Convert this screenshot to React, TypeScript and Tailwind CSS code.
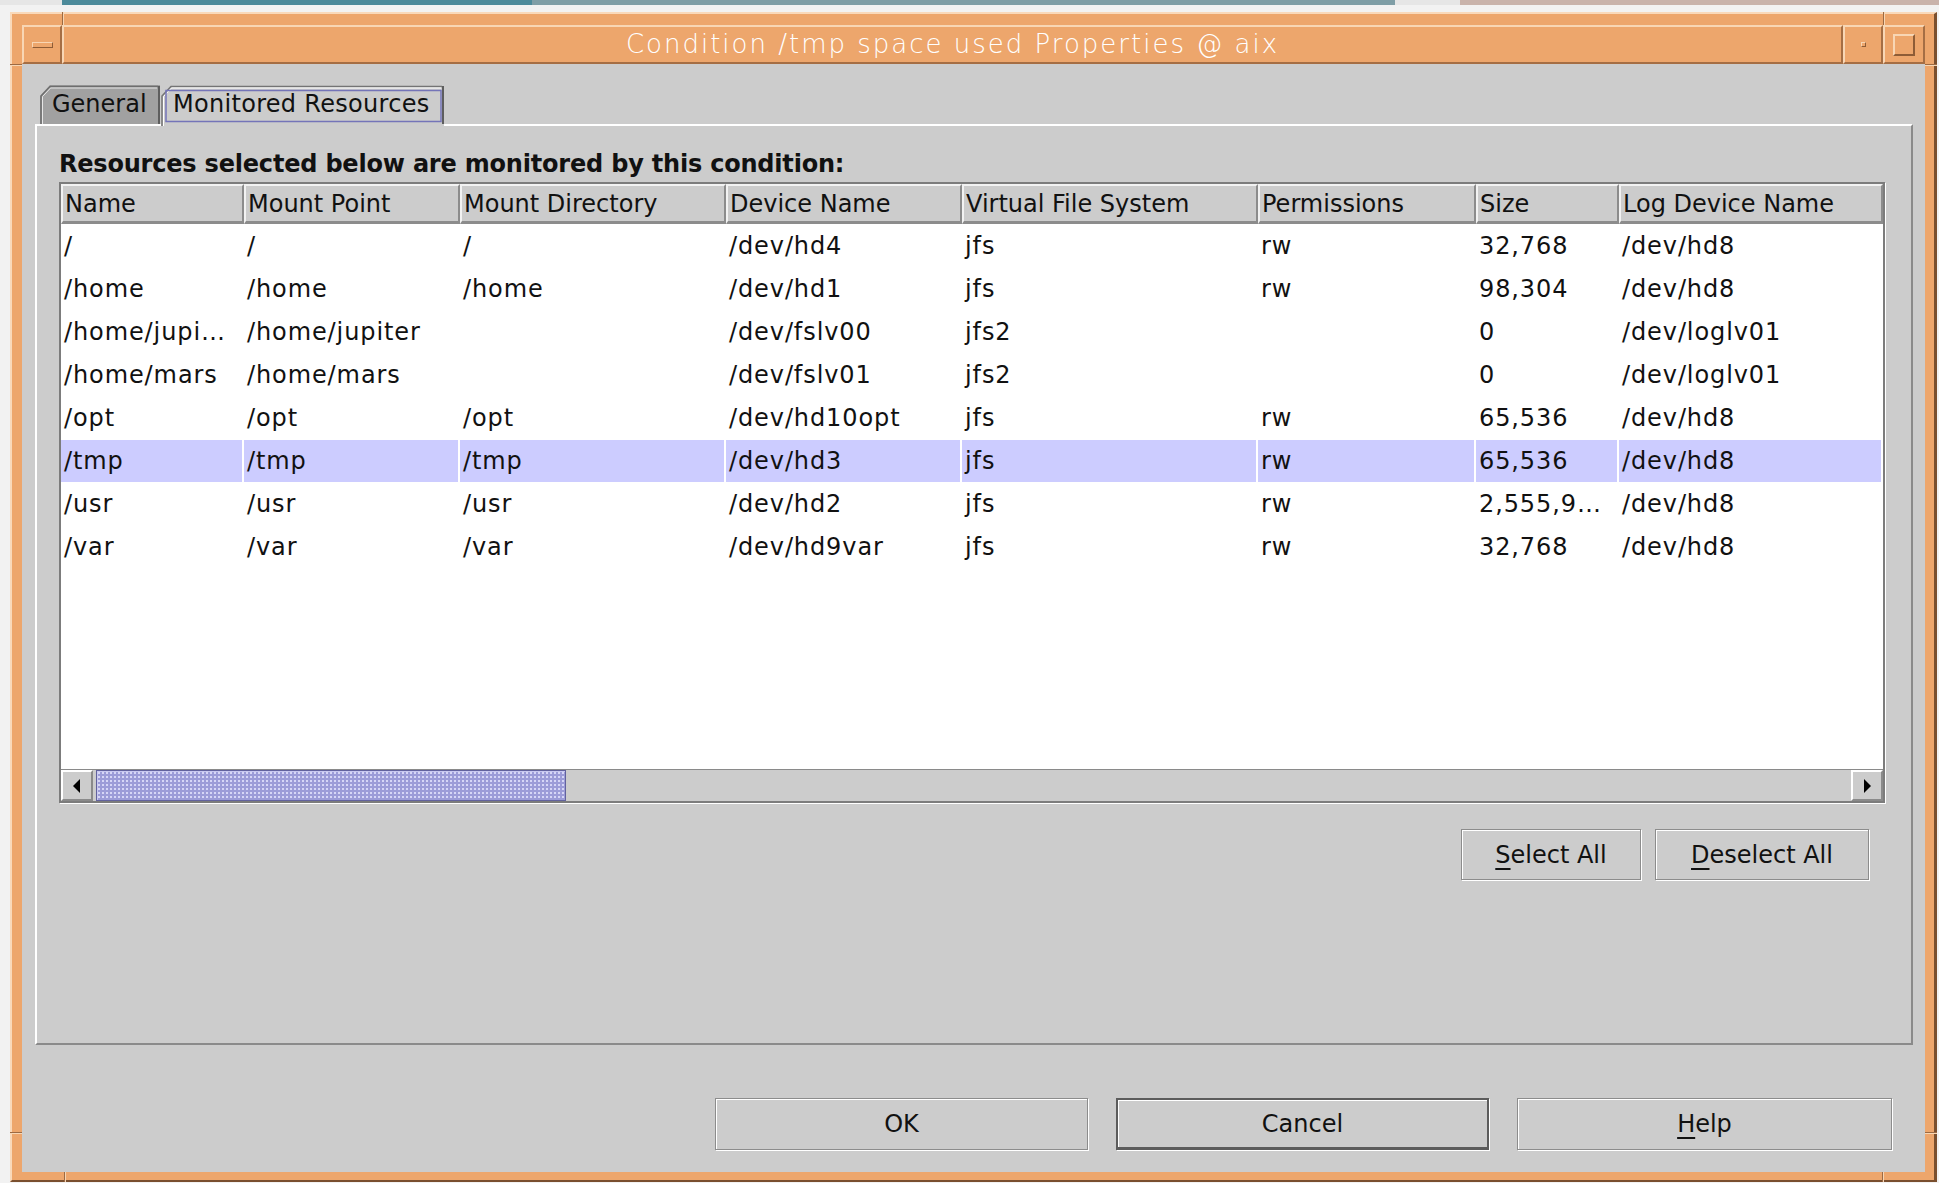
import React from "react";

type Col = { title: string; w: string };

const cols: Col[] = [
  { title: "Name", w: "w-[183px]" },
  { title: "Mount Point", w: "w-[216px]" },
  { title: "Mount Directory", w: "w-[266px]" },
  { title: "Device Name", w: "w-[236px]" },
  { title: "Virtual File System", w: "w-[296px]" },
  { title: "Permissions", w: "w-[218px]" },
  { title: "Size", w: "w-[143px]" },
  { title: "Log Device Name", w: "w-[264px]" },
];

const rows: string[][] = [
  ["/", "/", "/", "/dev/hd4", "jfs", "rw", "32,768", "/dev/hd8"],
  ["/home", "/home", "/home", "/dev/hd1", "jfs", "rw", "98,304", "/dev/hd8"],
  ["/home/jupi…", "/home/jupiter", "", "/dev/fslv00", "jfs2", "", "0", "/dev/loglv01"],
  ["/home/mars", "/home/mars", "", "/dev/fslv01", "jfs2", "", "0", "/dev/loglv01"],
  ["/opt", "/opt", "/opt", "/dev/hd10opt", "jfs", "rw", "65,536", "/dev/hd8"],
  ["/tmp", "/tmp", "/tmp", "/dev/hd3", "jfs", "rw", "65,536", "/dev/hd8"],
  ["/usr", "/usr", "/usr", "/dev/hd2", "jfs", "rw", "2,555,9…", "/dev/hd8"],
  ["/var", "/var", "/var", "/dev/hd9var", "jfs", "rw", "32,768", "/dev/hd8"],
];

const SELECTED = 5;

/* Window-manager frame pieces */
function FrameMarkV({ className }: { className: string }) {
  return (
    <div className={`absolute flex w-[2px] ${className}`}>
      <div className="w-[1px] bg-[#9c6a43]" />
      <div className="w-[1px] bg-[#f8d6b4]" />
    </div>
  );
}

function FrameMarkH({ className }: { className: string }) {
  return (
    <div className={`absolute flex h-[2px] flex-col ${className}`}>
      <div className="h-[1px] bg-[#9c6a43]" />
      <div className="h-[1px] bg-[#f8d6b4]" />
    </div>
  );
}

function TitleBar() {
  return (
    <div className="flex h-[39px] shrink-0">
      <div className="flex w-[40px] items-center justify-center border-2 border-t-[#f8d6b4] border-l-[#f8d6b4] border-b-[#a56e44] border-r-[#a56e44]">
        <div className="h-[6px] w-[21px] border border-t-[#f8d6b4] border-l-[#f8d6b4] border-b-[#8e5c36] border-r-[#8e5c36]" />
      </div>
      <div className="flex flex-1 items-center justify-center border-2 border-t-[#f8d6b4] border-l-[#f8d6b4] border-b-[#a56e44] border-r-[#a56e44]">
        <span className="font-['DejaVu_Sans',sans-serif] text-[26px] font-extralight tracking-[2px] text-white">
          Condition /tmp space used Properties @ aix
        </span>
      </div>
      <div className="flex w-[40px] items-center justify-center border-2 border-t-[#f8d6b4] border-l-[#f8d6b4] border-b-[#a56e44] border-r-[#a56e44]">
        <div className="h-[5px] w-[5px] border border-t-[#f8d6b4] border-l-[#f8d6b4] border-b-[#8e5c36] border-r-[#8e5c36]" />
      </div>
      <div className="flex w-[42px] items-center justify-center border-2 border-t-[#f8d6b4] border-l-[#f8d6b4] border-b-[#a56e44] border-r-[#a56e44]">
        <div className="h-[22px] w-[22px] border-2 border-t-[#f8d6b4] border-l-[#f8d6b4] border-b-[#8e5c36] border-r-[#8e5c36]" />
      </div>
    </div>
  );
}

/* Tabs */
function GeneralTab() {
  return (
    <div className="relative h-[39px] w-[120px]">
      <svg className="absolute inset-0" width="120" height="39" viewBox="0 0 120 39">
        <polygon points="0,39 0,11 10,0 120,0 120,39" fill="#a1a1a1" />
        <polyline points="1,39 1,11 10,1.5 118,1.5" fill="none" stroke="#6e6e6e" strokeWidth="1.5" />
        <polyline points="2.5,39 2.5,11.6 10.6,3 117,3" fill="none" stroke="#e6e6e6" strokeWidth="1" />
        <line x1="119" y1="1" x2="119" y2="39" stroke="#5e5e5e" strokeWidth="2" />
      </svg>
      <span className="relative block pl-[12px] text-[24px] leading-[39px] text-[#111]">General</span>
    </div>
  );
}

function ResourcesTab() {
  return (
    <div className="relative ml-[1px] h-[41px] w-[283px]">
      <svg className="absolute inset-0" width="283" height="41" viewBox="0 0 283 41">
        <polygon points="0,41 0,11 10,0 283,0 283,41" fill="#cccccc" />
        <polyline points="1,41 1,11 10,1.5 281,1.5" fill="none" stroke="#747474" strokeWidth="1.5" />
        <polyline points="2.5,41 2.5,11.6 10.6,3 280,3" fill="none" stroke="#ffffff" strokeWidth="1" />
        <line x1="282" y1="1" x2="282" y2="39" stroke="#5e5e5e" strokeWidth="2" />
        <rect x="5" y="5.5" width="275" height="31" fill="none" stroke="#7474b8" strokeWidth="1.5" />
      </svg>
      <span className="relative block pl-[12px] text-[24px] leading-[39px] tracking-[0.3px] text-[#111]">
        Monitored Resources
      </span>
    </div>
  );
}

/* Table */
function HeaderRow() {
  return (
    <div className="flex h-[40px] shrink-0 bg-[#cccccc]">
      {cols.map((c) => (
        <div
          key={c.title}
          className={`${c.w} flex items-center border-t-2 border-l-2 border-r-2 border-b-[3px] border-t-[#f2f2f2] border-l-[#f2f2f2] border-r-[#8c8c8c] border-b-[#8c8c8c] pl-[2px] text-[24px] text-[#111] whitespace-nowrap overflow-hidden`}
        >
          {c.title}
        </div>
      ))}
    </div>
  );
}

function BodyRow({ cells, selected }: { cells: string[]; selected: boolean }) {
  return (
    <div className="flex h-[43px]">
      {cells.map((v, i) => (
        <div
          key={i}
          className={`${cols[i].w} ${
            selected ? "bg-[#ccccff]" : "bg-white"
          } border-r-2 border-t border-white pl-[3px] text-[24px] leading-[43px] tracking-[0.9px] text-[#111] whitespace-nowrap overflow-hidden`}
        >
          {v}
        </div>
      ))}
    </div>
  );
}

function ScrollBar() {
  return (
    <div className="flex h-[32px] shrink-0 border-t border-[#8a8a8a] bg-[#cccccc]">
      <div className="flex w-[32px] items-center justify-center border-2 border-t-white border-l-white border-b-[#8a8a8a] border-r-[#8a8a8a]">
        <svg width="8" height="14" viewBox="0 0 8 14">
          <polygon points="7,0 7,14 0,7" fill="#000" />
        </svg>
      </div>
      <div className="ml-[3px] w-[470px] border border-[#62629e] bg-[#9c9cd8] bg-[radial-gradient(#d6d6f6_0.9px,transparent_1.1px)] bg-[length:4px_4px] shadow-[inset_1px_1px_0_#c8c8f0]" />
      <div className="flex-1" />
      <div className="flex w-[32px] items-center justify-center border-2 border-t-white border-l-white border-b-[#8a8a8a] border-r-[#8a8a8a]">
        <svg width="8" height="14" viewBox="0 0 8 14">
          <polygon points="1,0 1,14 8,7" fill="#000" />
        </svg>
      </div>
    </div>
  );
}

function Button({
  children,
  w,
  h,
  isDefault,
}: {
  children: React.ReactNode;
  w: string;
  h: string;
  isDefault?: boolean;
}) {
  return (
    <div
      className={`${w} ${h} flex items-center justify-center bg-[#cccccc] text-[24px] text-[#111] ${
        isDefault
          ? "border-2 border-b-[3px] border-[#5c5c5c] shadow-[inset_1px_1px_0_#ffffff,1px_1px_0_#ffffff]"
          : "border border-[#8c8c8c] shadow-[inset_1px_1px_0_#ffffff,1px_1px_0_#ffffff]"
      }`}
    >
      {children}
    </div>
  );
}

function Mnemonic({ ch }: { ch: string }) {
  return <span className="underline decoration-[2px] underline-offset-[5px]">{ch}</span>;
}

function Content() {
  return (
    <div className="flex flex-1 flex-col bg-[#cccccc] font-['DejaVu_Sans',sans-serif]">
      {/* tab strip */}
      <div className="relative z-10 -mb-[2px] ml-[18px] mt-[21px] flex items-start">
        <GeneralTab />
        <ResourcesTab />
      </div>

      {/* tab page */}
      <div className="ml-[13px] mr-[12px] flex h-[921px] shrink-0 flex-col border-2 border-t-white border-l-white border-b-[#8a8a8a] border-r-[#8a8a8a]">
        <div className="ml-[22px] mt-[23px] h-[30px] text-[24px] font-bold leading-[30px] tracking-[-0.2px] text-[#111]">
          Resources selected below are monitored by this condition:
        </div>

        <div className="ml-[22px] mt-[3px] flex w-[1826px] flex-col border-2 border-[#7c7c7c] bg-white shadow-[1px_1px_0_#ffffff]">
          <HeaderRow />
          <div className="flex h-[545px] flex-col bg-white">
            {rows.map((r, i) => (
              <BodyRow key={i} cells={r} selected={i === SELECTED} />
            ))}
          </div>
          <ScrollBar />
        </div>

        <div className="mt-[26px] flex justify-end gap-[14px] pr-[42px]">
          <Button w="w-[180px]" h="h-[51px]">
            <span>
              <Mnemonic ch="S" />
              elect All
            </span>
          </Button>
          <Button w="w-[214px]" h="h-[51px]">
            <span>
              <Mnemonic ch="D" />
              eselect All
            </span>
          </Button>
        </div>
      </div>

      {/* dialog buttons */}
      <div className="mt-[53px] flex justify-end gap-[28px] pr-[33px]">
        <Button w="w-[373px]" h="h-[52px]">
          OK
        </Button>
        <Button w="w-[373px]" h="h-[52px]" isDefault>
          Cancel
        </Button>
        <Button w="w-[375px]" h="h-[52px]">
          <span>
            <Mnemonic ch="H" />
            elp
          </span>
        </Button>
      </div>
    </div>
  );
}

function Window() {
  return (
    <div className="relative flex h-[1170px] w-[1927px] flex-col border-2 border-r-[3px] border-t-[#f9d9ba] border-l-[#f9d9ba] border-b-[#7a4f2e] border-r-[#7a4f2e] bg-[#eda66c] pb-[8px] pl-[10px] pr-[9px] pt-[11px]">
      {/* resize-handle divisions on the frame */}
      <FrameMarkV className="left-[50px] top-[-2px] h-[13px]" />
      <FrameMarkV className="left-[1871px] top-[-2px] h-[13px]" />
      <FrameMarkH className="left-[-2px] top-[50px] w-[12px]" />
      <FrameMarkH className="left-[1913px] top-[50px] w-[12px]" />
      <FrameMarkV className="left-[52px] top-[1158px] h-[10px]" />
      <FrameMarkV className="left-[1870px] top-[1158px] h-[10px]" />
      <FrameMarkH className="left-[-2px] top-[1118px] w-[12px]" />
      <FrameMarkH className="left-[1913px] top-[1118px] w-[12px]" />

      <TitleBar />
      <Content />
    </div>
  );
}

export default function App() {
  return (
    <div className="relative h-[1183px] w-[1939px] overflow-hidden bg-[#f2f2f2] font-['DejaVu_Sans',sans-serif] text-black">
      {/* desktop strip behind the window */}
      <div className="flex h-[5px]">
        <div className="w-[62px] bg-[#e6e6e6]" />
        <div className="w-[470px] bg-[#4c8a9a]" />
        <div className="w-[863px] bg-[#7f9ea6]" />
        <div className="w-[65px] bg-[#e6e6e6]" />
        <div className="flex-1 bg-[#c9b3ab]" />
      </div>
      <div className="pl-[10px] pt-[7px]">
        <Window />
      </div>
    </div>
  );
}
